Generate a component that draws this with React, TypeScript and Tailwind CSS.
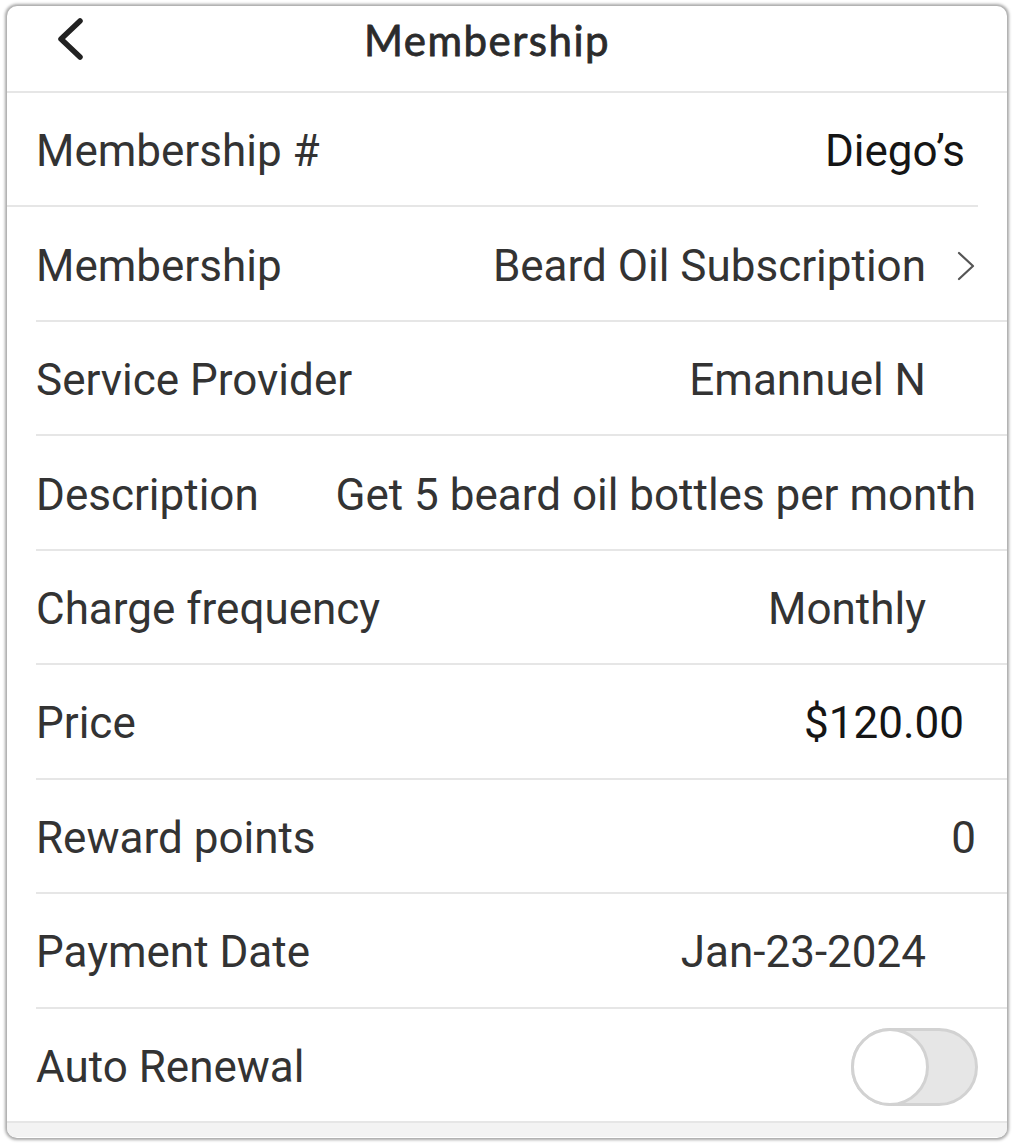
type Row = {
  label: string;
  value?: string;
  valueClass: string;
  padRight: string;
  chevron?: boolean;
  toggle?: boolean;
  lineClass: string;
};

const rows: Row[] = [
  { label: "Membership #", value: "Diego’s", valueClass: "text-[#151515]", padRight: "pr-[42px]", lineClass: "ml-0 mr-[29px]" },
  { label: "Membership", value: "Beard Oil Subscription", valueClass: "text-[#333]", padRight: "pr-[31px]", chevron: true, lineClass: "ml-[29px]" },
  { label: "Service Provider", value: "Emannuel N", valueClass: "text-[#333]", padRight: "pr-[81px]", lineClass: "ml-[29px]" },
  { label: "Description", value: "Get 5 beard oil bottles per month", valueClass: "text-[#333]", padRight: "pr-[31px]", lineClass: "ml-[29px]" },
  { label: "Charge frequency", value: "Monthly", valueClass: "text-[#333]", padRight: "pr-[81px]", lineClass: "ml-[29px]" },
  { label: "Price", value: "$120.00", valueClass: "text-[#151515]", padRight: "pr-[43px]", lineClass: "ml-[29px]" },
  { label: "Reward points", value: "0", valueClass: "text-[#333]", padRight: "pr-[31px]", lineClass: "ml-[29px]" },
  { label: "Payment Date", value: "Jan-23-2024", valueClass: "text-[#333]", padRight: "pr-[81px]", lineClass: "ml-[29px]" },
  { label: "Auto Renewal", valueClass: "", padRight: "pr-[29px]", toggle: true, lineClass: "ml-0" },
];

function Toggle() {
  return (
    <div className="relative h-[78px] w-[127px] rounded-full border-[3px] border-[#d2d2d2] bg-[#e6e6e6]">
      <div className="absolute left-[-3px] top-[-3px] h-[78px] w-[78px] rounded-full border-[3px] border-[#d2d2d2] bg-white" />
    </div>
  );
}

function App() {
  return (
    <div className="min-h-[1146px] w-[1014px] bg-white pl-[7px] pt-[6px] font-['Roboto',sans-serif]">
      <div className="h-[1132px] w-[1000px] overflow-hidden rounded-[10px] bg-white shadow-[0_0_3px_2px_rgba(0,0,0,0.35)]">
        <div className="relative flex h-[87px] items-start justify-center border-b-2 border-[#e6e6e6] pr-[40px] pt-[13px]">
          <svg className="absolute left-[47px] top-[12px]" width="32" height="42" viewBox="0 0 32 42" fill="none">
            <polyline points="26,3 7,21 26,39" stroke="#222" strokeWidth="5.5" strokeLinecap="round" strokeLinejoin="round" />
          </svg>
          <h1 className="font-['Lato',sans-serif] text-[42px] leading-[42px] tracking-[1.5px] text-[#2b2b2b] [-webkit-text-stroke:0.8px_#2b2b2b]">
            Membership
          </h1>
        </div>
        {rows.map((r) => (
          <div key={r.label} className="flex h-[114.44px] flex-col">
            <div className={`flex flex-1 items-center justify-between pl-[29px] pt-[4px] ${r.padRight}`}>
              <span className="text-[44px] text-[#333]">{r.label}</span>
              {r.value && (
                <div className="flex items-center">
                  <span className={`text-[44px] ${r.valueClass}`}>{r.value}</span>
                  {r.chevron && (
                    <svg className="ml-[30px]" width="20" height="32" viewBox="0 0 20 32" fill="none">
                      <polyline points="3,3 17,16 3,29" stroke="#555" strokeWidth="2.2" strokeLinecap="round" strokeLinejoin="round" />
                    </svg>
                  )}
                </div>
              )}
              {r.toggle && <Toggle />}
            </div>
            <div className={`h-[2px] bg-[#e6e6e6] ${r.lineClass}`} />
          </div>
        ))}
        <div className="h-[14px] bg-[#f3f3f3]" />
      </div>
    </div>
  );
}

export default App;
